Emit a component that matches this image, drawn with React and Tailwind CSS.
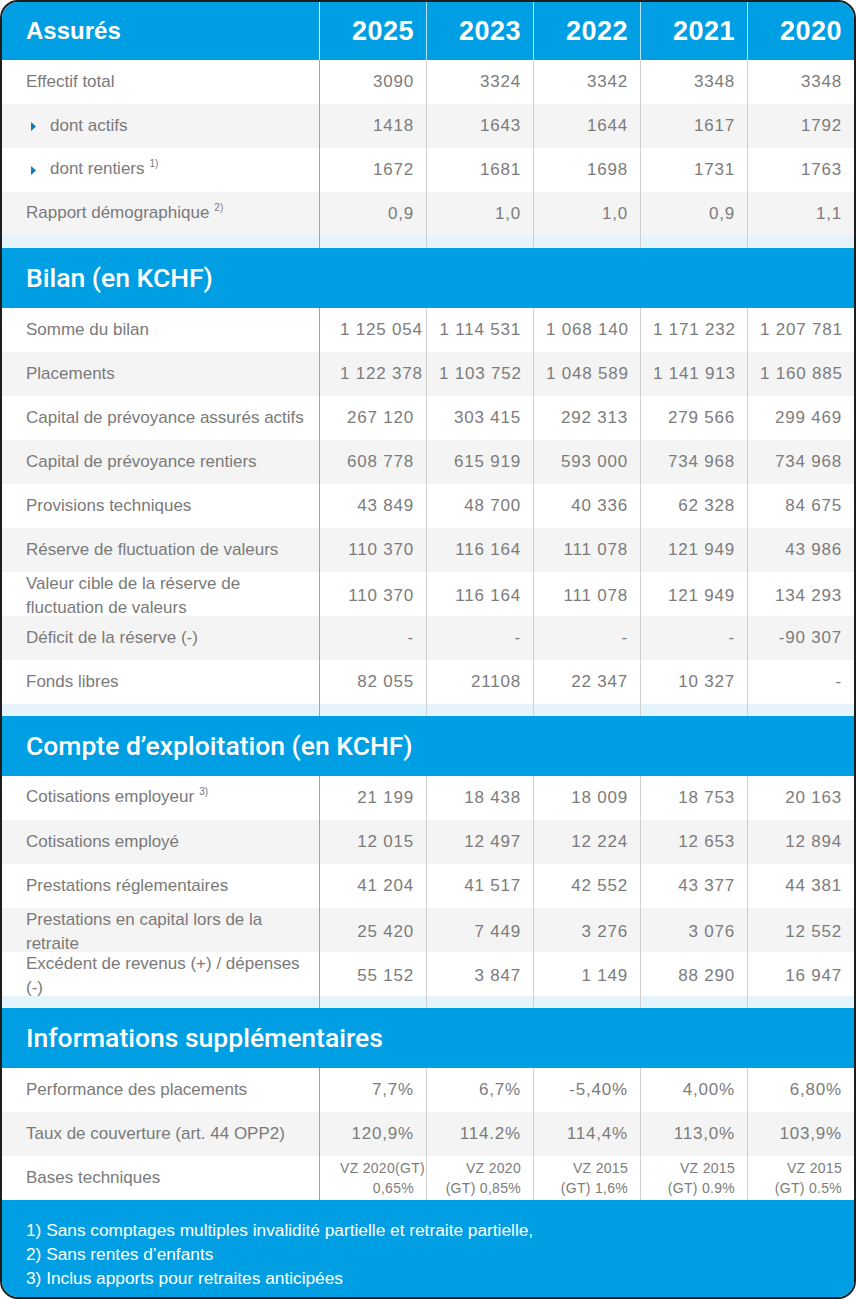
import React from 'react'

const years = ['2025', '2023', '2022', '2021', '2020']

const assures = [
  { label: 'Effectif total', values: ['3090', '3324', '3342', '3348', '3348'] },
  { label: 'dont actifs', sub: true, values: ['1418', '1643', '1644', '1617', '1792'] },
  { label: 'dont rentiers', sub: true, sup: '1)', values: ['1672', '1681', '1698', '1731', '1763'] },
  { label: 'Rapport démographique', sup: '2)', values: ['0,9', '1,0', '1,0', '0,9', '1,1'] },
]

const bilan = [
  { label: 'Somme du bilan', values: ['1 125 054', '1 114 531', '1 068 140', '1 171 232', '1 207 781'] },
  { label: 'Placements', values: ['1 122 378', '1 103 752', '1 048 589', '1 141 913', '1 160 885'] },
  { label: 'Capital de prévoyance assurés actifs', values: ['267 120', '303 415', '292 313', '279 566', '299 469'] },
  { label: 'Capital de prévoyance rentiers', values: ['608 778', '615 919', '593 000', '734 968', '734 968'] },
  { label: 'Provisions techniques', values: ['43 849', '48 700', '40 336', '62 328', '84 675'] },
  { label: 'Réserve de fluctuation de valeurs', values: ['110 370', '116 164', '111 078', '121 949', '43 986'] },
  { label: 'Valeur cible de la réserve de fluctuation de valeurs', values: ['110 370', '116 164', '111 078', '121 949', '134 293'] },
  { label: 'Déficit de la réserve (-)', values: ['-', '-', '-', '-', '-90 307'] },
  { label: 'Fonds libres', values: ['82 055', '21108', '22 347', '10 327', '-'] },
]

const compte = [
  { label: 'Cotisations employeur', sup: '3)', values: ['21 199', '18 438', '18 009', '18 753', '20 163'] },
  { label: 'Cotisations employé', values: ['12 015', '12 497', '12 224', '12 653', '12 894'] },
  { label: 'Prestations réglementaires', values: ['41 204', '41 517', '42 552', '43 377', '44 381'] },
  { label: 'Prestations en capital lors de la retraite', values: ['25 420', '7 449', '3 276', '3 076', '12 552'] },
  { label: 'Excédent de revenus (+) / dépenses (-)', values: ['55 152', '3 847', '1 149', '88 290', '16 947'] },
]

const infos = [
  { label: 'Performance des placements', values: ['7,7%', '6,7%', '-5,40%', '4,00%', '6,80%'] },
  { label: 'Taux de couverture (art. 44 OPP2)', values: ['120,9%', '114.2%', '114,4%', '113,0%', '103,9%'] },
  {
    label: 'Bases techniques',
    small: true,
    values: [
      ['VZ 2020(GT)', '0,65%'],
      ['VZ 2020', '(GT) 0,85%'],
      ['VZ 2015', '(GT) 1,6%'],
      ['VZ 2015', '(GT) 0.9%'],
      ['VZ 2015', '(GT) 0.5%'],
    ],
  },
]

const Row = ({ row, shaded }) => (
  <div className={`grid grid-cols-[317px_repeat(5,107px)] h-11 ${shaded ? 'bg-[#f4f4f4]' : 'bg-white'}`}>
    <div className={`flex items-center pr-3 text-[17px] leading-6 text-[#7a7a7a] ${row.sub ? 'pl-[29px]' : 'pl-6'}`}>
      {row.sub && (
        <svg width="5" height="9" viewBox="0 0 5 9" className="mr-[14px] shrink-0">
          <path d="M0 0 L5 4.5 L0 9 Z" fill="#0b7cc0" />
        </svg>
      )}
      <span>
        {row.label}
        {row.sup && <span className="ml-[5px] text-[10px] relative -top-[7px]">{row.sup}</span>}
      </span>
    </div>
    {row.values.map((v, i) => (
      <div
        key={i}
        className={`flex flex-col justify-center border-l whitespace-nowrap text-right text-[#7c7c7c] pr-3 ${
          i === 0 ? 'border-[#a3a3a3] pl-5' : 'border-[#cfcfcf] pl-3'
        }`}
      >
        {row.small ? (
          <div className="text-[14px] leading-5 tracking-[0.3px]">
            <div>{v[0]}</div>
            <div>{v[1]}</div>
          </div>
        ) : (
          <div className="text-[17px] tracking-[0.8px]">{v}</div>
        )}
      </div>
    ))}
  </div>
)

const Spacer = () => (
  <div className="grid grid-cols-[317px_repeat(5,107px)] h-3 bg-[#e5f3fb]">
    <div />
    <div className="border-l border-[#a3a3a3]" />
    <div className="border-l border-[#cfcfcf]" />
    <div className="border-l border-[#cfcfcf]" />
    <div className="border-l border-[#cfcfcf]" />
    <div className="border-l border-[#cfcfcf]" />
  </div>
)

const SectionTitle = ({ children }) => (
  <div className="h-[60px] bg-[#009fe3] flex items-center pl-6 text-white text-[26.5px] font-medium font-['Roboto',sans-serif]">
    {children}
  </div>
)

const Section = ({ rows }) => (
  <div>
    {rows.map((row, i) => (
      <Row key={i} row={row} shaded={i % 2 === 1} />
    ))}
  </div>
)

export default function App() {
  return (
    <div className="w-[856px] h-[1299px] border-2 border-[#1d1d1d] rounded-[18px] overflow-hidden bg-white font-['Liberation_Sans',Arial,sans-serif]">
      {/* header with years */}
      <div className="grid grid-cols-[317px_repeat(5,107px)] h-[58px] bg-[#009fe3] text-white font-bold">
        <div className="flex items-center pl-6 text-[24px]">Assurés</div>
        {years.map((y, i) => (
          <div
            key={y}
            className={`flex items-center justify-end pr-3 border-l text-[27px] tracking-[0.5px] ${
              i === 0 ? 'border-white' : 'border-[#b5e3f7]'
            }`}
          >
            {y}
          </div>
        ))}
      </div>
      <Section rows={assures} />
      <Spacer />

      <SectionTitle>Bilan (en KCHF)</SectionTitle>
      <Section rows={bilan} />
      <Spacer />

      <SectionTitle>Compte d’exploitation (en KCHF)</SectionTitle>
      <Section rows={compte} />
      <Spacer />

      <SectionTitle>Informations supplémentaires</SectionTitle>
      <Section rows={infos} />

      {/* footnotes */}
      <div className="bg-[#009fe3] h-[97px] pl-6 pt-[18px] text-white text-[17.3px] leading-6">
        <div>1) Sans comptages multiples invalidité partielle et retraite partielle,</div>
        <div>2) Sans rentes d’enfants</div>
        <div>3) Inclus apports pour retraites anticipées</div>
      </div>
    </div>
  )
}
